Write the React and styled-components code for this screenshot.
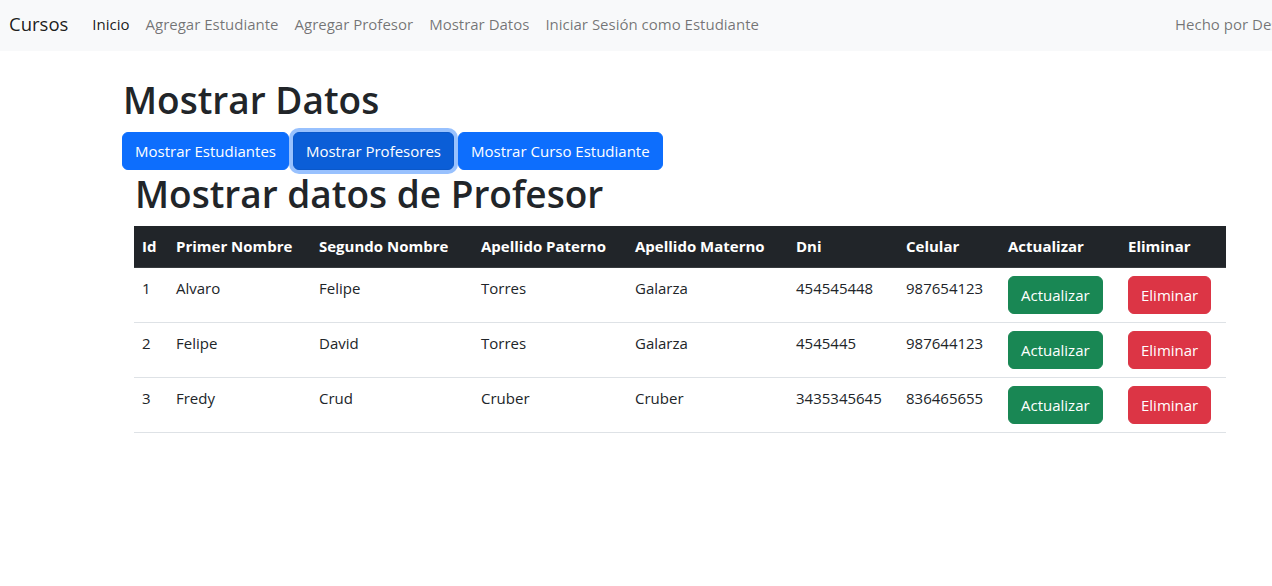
import React from 'react';
import styled, { createGlobalStyle } from 'styled-components';

const GlobalStyle = createGlobalStyle`
  * { box-sizing: border-box; }
  body {
    margin: 0;
    font-family: "Open Sans", "Noto Sans", sans-serif;
    font-size: 15px;
    line-height: 24px;
    color: #212529;
    background: #fff;
    overflow-x: hidden;
  }
`;

const Navbar = styled.nav`
  display: flex;
  align-items: center;
  height: 51px;
  padding: 0 0 4px 9px;
  background: #f8f9fa;
  white-space: nowrap;
`;

const Brand = styled.a`
  font-size: 18.5px;
  color: rgba(0, 0, 0, 0.9);
  margin-right: 16px;
  text-decoration: none;
`;

const NavList = styled.ul`
  display: flex;
  flex: 1;
  list-style: none;
  margin: 0;
  padding: 0;
`;

const NavLink = styled.a`
  display: block;
  padding: 8px;
  color: ${p => (p.$active ? 'rgba(0,0,0,0.9)' : 'rgba(0,0,0,0.55)')};
  text-decoration: none;
`;

const NavText = styled.span`
  width: 97px;
  color: rgba(0, 0, 0, 0.55);
  overflow: visible;
`;

const Main = styled.main`
  padding: 25px 0 0 122px;
  width: 1238px;
`;

const Title = styled.h1`
  font-size: 37px;
  font-weight: 600;
  line-height: 48px;
  margin: 0 0 8px 1px;
`;

const ButtonRow = styled.div`
  display: flex;
  gap: 4px;
`;

const Button = styled.button`
  font-family: inherit;
  font-size: 15px;
  line-height: 24px;
  padding: 6px 12px;
  border: 1px solid ${p => p.$bg};
  border-radius: 6px;
  color: #fff;
  background: ${p => p.$bg};
  cursor: pointer;
  white-space: nowrap;
  ${p => p.$focused && `
    background: #0b5ed7;
    border-color: #0a58ca;
    box-shadow: 0 0 0 4px rgba(49, 132, 253, 0.5);
  `}
`;

const Section = styled.section`
  margin-left: 12px;
  width: 1092px;
`;

const SubTitle = styled.h1`
  font-size: 37px;
  font-weight: 600;
  line-height: 48px;
  margin: 0 0 8px 1px;
`;

const Table = styled.table`
  width: 100%;
  table-layout: fixed;
  border-collapse: collapse;
  vertical-align: top;
`;

const Th = styled.th`
  text-align: left;
  font-weight: 700;
  padding: 8px 8px 9px;
  background: #212529;
  color: #fff;
  border-bottom: 1px solid #373b3e;
  white-space: nowrap;
`;

const Td = styled.td`
  padding: 8px;
  border-bottom: 1px solid #dee2e6;
  vertical-align: top;
  white-space: nowrap;
`;

const widths = [34, 143, 162, 154, 161, 110, 102, 120, 106];
const headers = ['Id', 'Primer Nombre', 'Segundo Nombre', 'Apellido Paterno', 'Apellido Materno', 'Dni', 'Celular', 'Actualizar', 'Eliminar'];

const profesores = [
  { id: 1, primer: 'Alvaro', segundo: 'Felipe', paterno: 'Torres', materno: 'Galarza', dni: '454545448', celular: '987654123' },
  { id: 2, primer: 'Felipe', segundo: 'David', paterno: 'Torres', materno: 'Galarza', dni: '4545445', celular: '987644123' },
  { id: 3, primer: 'Fredy', segundo: 'Crud', paterno: 'Cruber', materno: 'Cruber', dni: '3435345645', celular: '836465655' },
];

export default function App() {
  return (
    <>
      <GlobalStyle />
      <Navbar>
        <Brand href="#">Cursos</Brand>
        <NavList>
          <li><NavLink $active href="#">Inicio</NavLink></li>
          <li><NavLink href="#">Agregar Estudiante</NavLink></li>
          <li><NavLink href="#">Agregar Profesor</NavLink></li>
          <li><NavLink href="#">Mostrar Datos</NavLink></li>
          <li><NavLink href="#">Iniciar Sesión como Estudiante</NavLink></li>
        </NavList>
        <NavText>Hecho por Desarrollador</NavText>
      </Navbar>
      <Main>
        <Title>Mostrar Datos</Title>
        <ButtonRow>
          <Button $bg="#0d6efd">Mostrar Estudiantes</Button>
          <Button $bg="#0d6efd" $focused>Mostrar Profesores</Button>
          <Button $bg="#0d6efd">Mostrar Curso Estudiante</Button>
        </ButtonRow>
        <Section>
          <SubTitle>Mostrar datos de Profesor</SubTitle>
          <Table>
            <colgroup>
              {widths.map((w, i) => <col key={i} style={{ width: w }} />)}
            </colgroup>
            <thead>
              <tr>{headers.map(h => <Th key={h}>{h}</Th>)}</tr>
            </thead>
            <tbody>
              {profesores.map(p => (
                <tr key={p.id}>
                  <Td>{p.id}</Td>
                  <Td>{p.primer}</Td>
                  <Td>{p.segundo}</Td>
                  <Td>{p.paterno}</Td>
                  <Td>{p.materno}</Td>
                  <Td>{p.dni}</Td>
                  <Td>{p.celular}</Td>
                  <Td><Button $bg="#198754">Actualizar</Button></Td>
                  <Td><Button $bg="#dc3545">Eliminar</Button></Td>
                </tr>
              ))}
            </tbody>
          </Table>
        </Section>
      </Main>
    </>
  );
}
